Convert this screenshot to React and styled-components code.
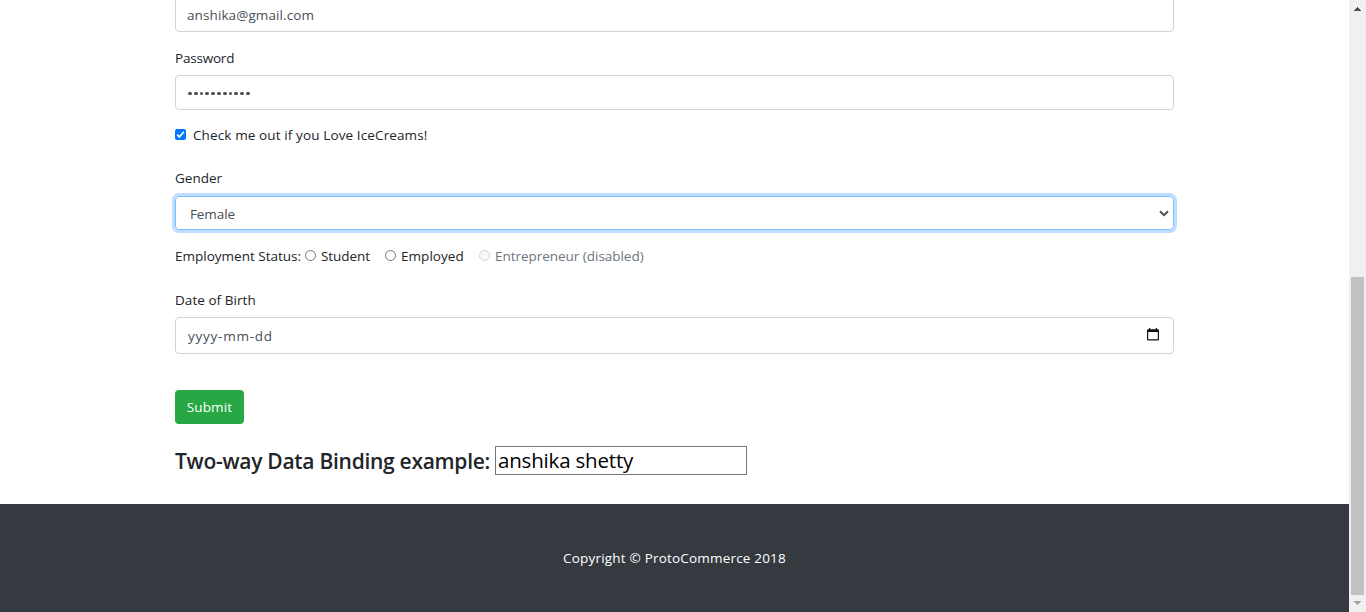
import React from "react";
import styled, { createGlobalStyle } from "styled-components";

const GlobalStyle = createGlobalStyle`
  * { box-sizing: border-box; }
  body {
    margin: 0;
    overflow: hidden;
    background: #fff;
    color: #212529;
    font-family: "Open Sans", "Noto Sans", sans-serif;
    font-size: 13.5px;
  }
`;

const Window = styled.div`
  display: grid;
  grid-template-columns: 1fr 17px;
  height: 612px;
  overflow: hidden;
`;

const Page = styled.div`
  display: flex;
  flex-direction: column;
  min-width: 0;
  height: 612px;
  overflow: hidden;
`;

const Form = styled.main`
  display: flex;
  flex-direction: column;
  align-items: stretch;
  flex: none;
  width: 999px;
  height: 507px;
  margin: -3px 0 0 175px;
`;

const Text = styled.span`
  white-space: nowrap;
  letter-spacing: ${(p) => p.$spacing || 0}px;
`;

const Label = styled.label`
  display: block;
  height: 22px;
  line-height: 22px;
  margin-top: ${(p) => p.$top}px;
`;

const Field = styled.div`
  display: flex;
  align-items: center;
  justify-content: space-between;
  flex: none;
  height: ${(p) => p.$height || 35}px;
  margin-top: ${(p) => p.$top || 0}px;
  padding: ${(p) => p.$pad || "0 12px 0 11px"};
  color: #495057;
  border: 1px solid #ced4da;
  border-radius: 4px;
`;

const Select = styled(Field)`
  border-color: #80bdff;
  box-shadow: 0 0 0 3px #bfdeff;

  ${Text} {
    padding-top: 2px;
  }
`;

const Dots = styled.div`
  display: flex;
  gap: 2px;
  padding: 2px 0 0 1px;
`;

const Dot = styled.i`
  width: 3.8px;
  height: 3.8px;
  border-radius: 50%;
  background: #495057;
`;

const CheckRow = styled.label`
  display: flex;
  align-items: center;
  gap: 7px;
  height: 22px;
  margin-top: 14px;
`;

const CheckBox = styled.span`
  display: flex;
  width: 11px;
  height: 11px;
  margin-bottom: 1px;
  border-radius: 2px;
  background: #0075ff;
`;

const RadioRow = styled.div`
  display: flex;
  align-items: center;
  height: 22px;
  margin-top: 15px;
`;

const Caption = styled.span`
  width: 130px;
`;

const Option = styled.label`
  display: flex;
  align-items: center;
  gap: 5px;
  width: ${(p) => p.$width}px;
  color: ${(p) => (p.$disabled ? "#6c757d" : "#212529")};
`;

const Radio = styled.span`
  flex: none;
  width: 11px;
  height: 11px;
  margin-bottom: 2px;
  border: 1px solid ${(p) => (p.$disabled ? "#d3d3d3" : "#767676")};
  border-radius: 50%;
  background: ${(p) => (p.$disabled ? "#f8f8f8" : "#fff")};
`;

const Submit = styled.button`
  width: 69px;
  height: 34px;
  flex: none;
  margin: 36px 0 0;
  padding: 0;
  color: #fff;
  font: inherit;
  background: #28a745;
  border: 0;
  border-radius: 4px;
`;

const Binding = styled.div`
  display: flex;
  align-items: center;
  height: 29px;
  margin-top: 22px;
`;

const Heading = styled.h4`
  width: 320px;
  margin: 0;
  padding-top: 1px;
  font-size: 21px;
  font-weight: 550;
  line-height: 29px;
`;

const PlainInput = styled.div`
  width: 252px;
  height: 29px;
  padding-left: 2px;
  color: #000;
  font-size: 20.5px;
  line-height: 27px;
  border: 1px solid #767676;
`;

const Footer = styled.footer`
  flex: none;
  height: 108px;
  padding-top: 43px;
  color: #fff;
  line-height: 22px;
  text-align: center;
  background: #343a40;
`;

const ScrollBar = styled.div`
  display: flex;
  flex-direction: column;
  align-items: center;
  height: 612px;
  background: #f0f0f0;
`;

const Thumb = styled.div`
  width: 13px;
  height: 318px;
  margin-top: 260px;
  background: #c1c1c1;
`;

const Chevron = () => (
  <svg width="10" height="7" viewBox="0 0 10 7">
    <path d="M1 1.2 5 5.2 9 1.2" fill="none" stroke="#495057" strokeWidth="2" />
  </svg>
);

const CalendarIcon = styled.svg`
  margin-bottom: 2px;
`;

const Calendar = () => (
  <CalendarIcon width="12" height="13" viewBox="0 0 12 13">
    <path d="M2 0h1.3v1.2h5.4V0H10v1.2h.8q1.2 0 1.2 1.2v8.9q0 1.2-1.2 1.2H1.2Q0 12.500 0 11.300V2.400Q0 1.200 1.200 1.200H2ZM1.200 4v7.300h9.600V4Z" fill="#111" fillRule="evenodd" />
  </CalendarIcon>
);

const ArrowUp = () => (
  <svg width="17" height="17" viewBox="0 0 17 17" shapeRendering="crispEdges">
    <path d="M8 7h1v1h1v1h1v1h1v1H5v-1h1V9h1V8h1Z" fill="#505050" />
  </svg>
);

const ArrowDown = () => (
  <svg width="17" height="17" viewBox="0 0 17 17" shapeRendering="crispEdges">
    <path d="M5 6h7v1h-1v1h-1v1H9v1H8V9H7V8H6V7H5Z" fill="#a3a3a3" />
  </svg>
);

export default function App() {
  return (
    <Window>
      <GlobalStyle />
      <Page>
        <Form>
          <Field><Text $spacing={0.1}>anshika@gmail.com</Text></Field>
          <Label $top={15}><Text $spacing={-0.2}>Password</Text></Label>
          <Field $top={6}>
            <Dots>{Array.from({ length: 11 }, (_, i) => <Dot key={i} />)}</Dots>
          </Field>
          <CheckRow>
            <CheckBox>
              <svg width="11" height="11" viewBox="0 0 11 11">
                <path d="M2.200 5.700 4.400 7.900 8.900 2.700" fill="none" stroke="#fff" strokeWidth="1.700" />
              </svg>
            </CheckBox>
            <Text $spacing={0.12}>Check me out if you Love IceCreams!</Text>
          </CheckRow>
          <Label $top={21}><Text>Gender</Text></Label>
          <Select $top={7} $height={34} $pad="0 4px 0 14px">
            <Text $spacing={-0.1}>Female</Text>
            <Chevron />
          </Select>
          <RadioRow>
            <Caption><Text>Employment Status:</Text></Caption>
            <Option $width={80}><Radio /><Text $spacing={-0.05}>Student</Text></Option>
            <Option $width={94}><Radio /><Text $spacing={0.05}>Employed</Text></Option>
            <Option $width={180} $disabled><Radio $disabled /><Text $spacing={-0.03}>Entrepreneur (disabled)</Text></Option>
          </RadioRow>
          <Label $top={22}><Text $spacing={0.05}>Date of Birth</Text></Label>
          <Field $top={6} $height={37} $pad="0 14px 0 12px">
            <Text $spacing={0.76}>yyyy-mm-dd</Text>
            <Calendar />
          </Field>
          <Submit type="button"><Text $spacing={0.1}>Submit</Text></Submit>
          <Binding>
            <Heading><Text $spacing={-0.28}>Two-way Data Binding example:</Text></Heading>
            <PlainInput><Text $spacing={-0.18}>anshika shetty</Text></PlainInput>
          </Binding>
        </Form>
        <Footer><Text $spacing={0.19}>Copyright © ProtoCommerce 2018</Text></Footer>
      </Page>
      <ScrollBar>
        <ArrowUp />
        <Thumb />
        <ArrowDown />
      </ScrollBar>
    </Window>
  );
}
